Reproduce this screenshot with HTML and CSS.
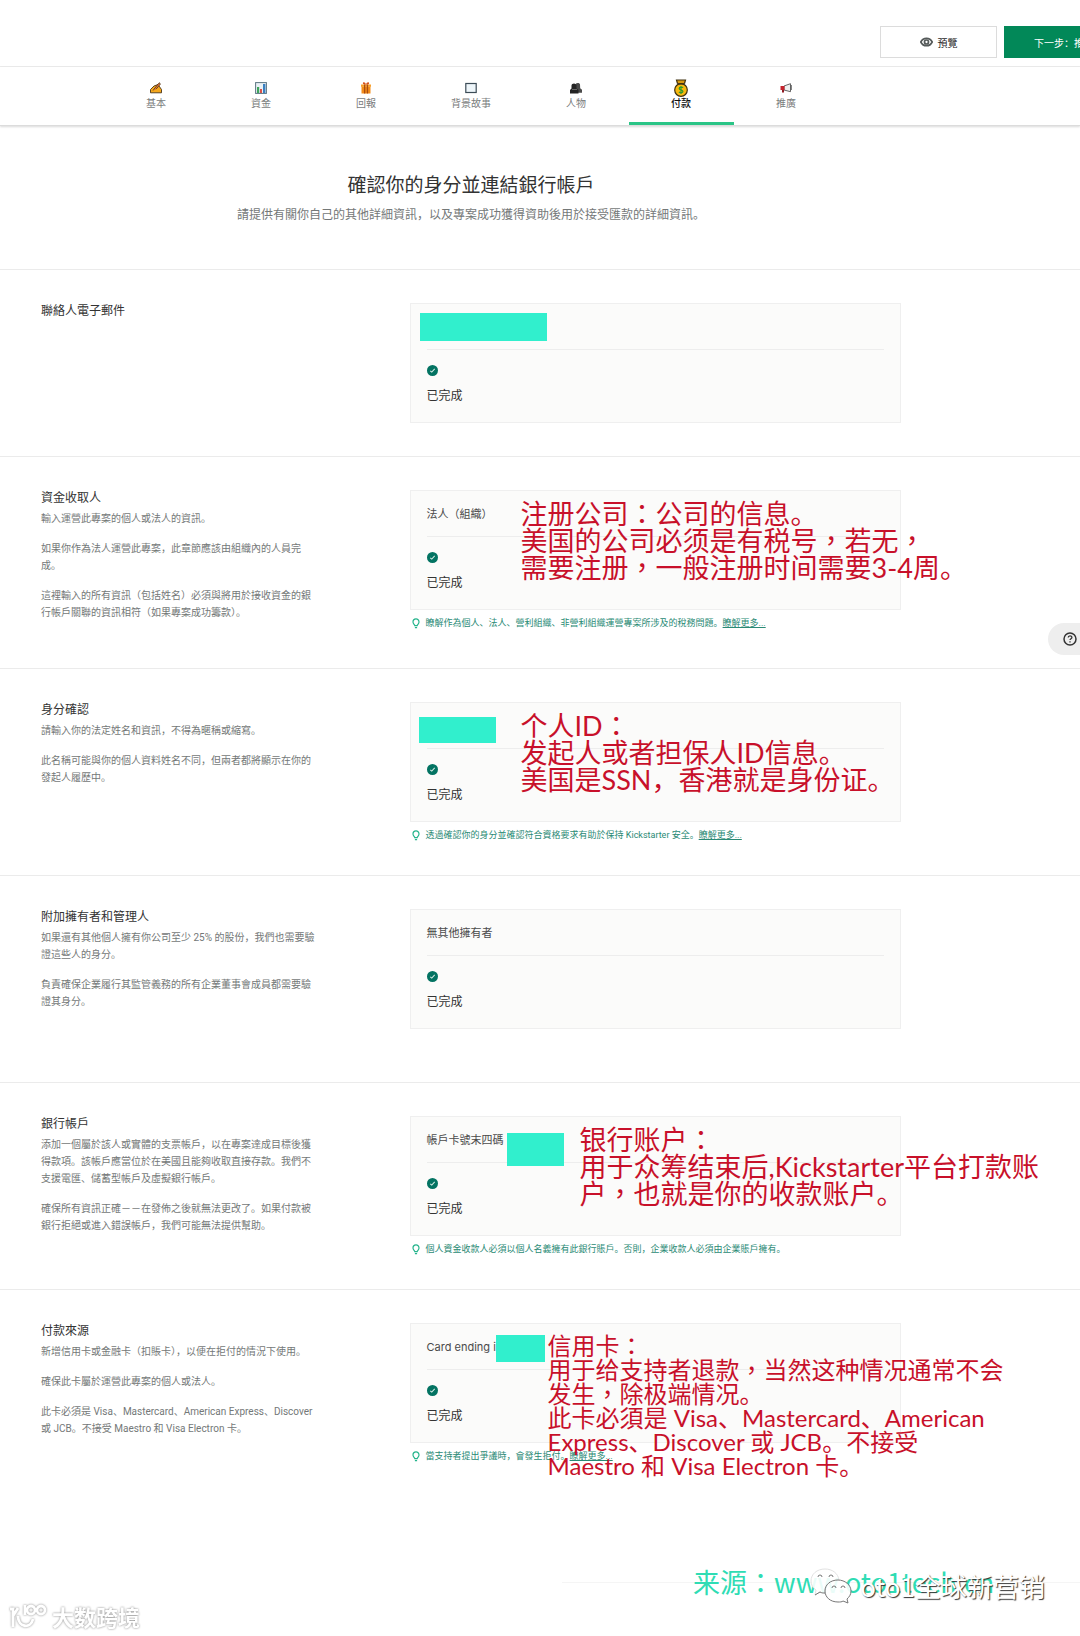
FILE: index.html
```html
<!DOCTYPE html>
<html lang="zh">
<head>
    <meta charset="utf-8">
    <meta name="viewport" content="width=device-width, initial-scale=1.0">
    <title>確認你的身分並連結銀行帳戶</title>
    <link rel="stylesheet" href="styles.css">
</head>
<body>
    <svg class="sprite" width="0" height="0" aria-hidden="true">
        <symbol id="check" viewBox="0 0 12 12">
            <circle cx="6" cy="6" r="6" fill="#037362"/>
            <path d="M3.6 6.3l1.6 1.5 3.2-3.5" fill="none" stroke="#d5ece6" stroke-width="1.1"/>
        </symbol>
        <symbol id="bulb" viewBox="0 0 8 11">
            <path d="M2.8 7.6C2.6 6.4 1 5.8 1 3.9a3 3 0 0 1 6 0c0 1.900-1.600 2.500-1.800 3.700zM2.900 9.600h2.200" fill="none" stroke="#25b48c" stroke-width="1.2"/>
        </symbol>
    </svg>

    <header class="topbar">
        <button class="btn" type="button">
            <svg width="13" height="10" viewBox="0 0 13 10"><path d="M.8 5C2 2.600 4 1.300 6.500 1.300S11 2.600 12.200 5C11 7.400 9 8.700 6.500 8.700S2 7.400.8 5z" fill="none" stroke="#555a5a" stroke-width="1.700"/><circle cx="6.500" cy="5" r="2" fill="none" stroke="#555a5a" stroke-width="1.700"/></svg>
            預覽
        </button>
        <button class="btn btn-primary" type="button">下一步：推廣</button>
    </header>

    <nav class="tabs">
        <div class="wrap tabs-list">
            <a class="tab" href="#">
                <svg width="12" height="12" viewBox="0 0 12 12"><path d="M.5 10.800V7.500L4 4l4-1.500 1 1.500 2.500 3.500v3.300z" fill="#f5a81c" stroke="#4a3417" stroke-width=".9"/><path d="M3 8.500l5.500-7 1-.8.8 1.500-4.300 5" fill="#e8743b" stroke="#4a3417" stroke-width=".8"/></svg>
                基本
            </a>
            <a class="tab" href="#">
                <svg width="12" height="12" viewBox="0 0 12 12"><rect x=".6" y=".6" width="10.800" height="10.800" fill="#e9f1f5" stroke="#5b7482"/><path d="M2 5h2.200v6H2z" fill="#3da45c"/><path d="M5 7h2v4H5z" fill="#d9534a"/><path d="M8 2h2.400v9H8z" fill="#3a7fc1"/></svg>
                資金
            </a>
            <a class="tab" href="#">
                <svg width="12" height="12" viewBox="0 0 12 12"><path d="M1.500 4.500h9v7h-9z" fill="#f28c1b"/><path d="M1 2.500h10v2.300H1z" fill="#f7a02c"/><path d="M4 2.500h1.300v9H4zM6.800 2.500h1.300v9H6.800z" fill="#a94c12"/><path d="M6 2.500C3 2.500 2.500 1.500 3 .7 4-.2 5.500.7 6 2.500 6.500.7 8-.2 9 .7c.5.8 0 1.800-3 1.800z" fill="#d5521a"/></svg>
                回報
            </a>
            <a class="tab" href="#">
                <svg width="12" height="12" viewBox="0 0 12 12"><rect x=".8" y="1.500" width="10.400" height="9" fill="#eef6fa" stroke="#3c4c57" stroke-width="1.200"/></svg>
                背景故事
            </a>
            <a class="tab" href="#">
                <svg width="12" height="12" viewBox="0 0 12 12"><path d="M6 1.500c1-1 3.500-.8 4 .8l.2 4 1.800 1.500v3H6z" fill="#4a4a4a"/><path d="M1.500 3.500C1.500.8 6.500.8 6.500 3.500v3L8.500 8v3.500H0V8l1.500-1.500z" fill="#242424"/><path d="M2 7.500h5" stroke="#777" stroke-width=".8"/></svg>
                人物
            </a>
            <a class="tab tab-active" href="#" aria-current="page">
                <svg width="16" height="18" viewBox="0 0 16 18"><path d="M4.500 4.500l-1-3.500h9l-1 3.500" fill="#d99a10" stroke="#3f3010" stroke-width="1.200"/><circle cx="8" cy="11" r="6.300" fill="#f7b90f" stroke="#3f3010" stroke-width="1.200"/><path d="M4.200 4.800h7.600" stroke="#3f3010" stroke-width="1.400"/><path d="M10 8.700C9.500 7.900 6.200 7.700 6.200 9.400s3.700 1.200 3.700 3c0 1.700-3.200 1.600-3.900.5M8 7v8" fill="none" stroke="#2f9c2c" stroke-width="1.200"/></svg>
                付款
            </a>
            <a class="tab" href="#">
                <svg width="12" height="12" viewBox="0 0 12 12"><path d="M4 4l6.500-2.300v8L4 8z" fill="#eef0f0" stroke="#555" stroke-width=".9"/><path d="M.5 4h4v4h-4z" fill="#c4222c"/><path d="M2 8h2v2.500H2z" fill="#8f1a22"/><path d="M11.300 3v5" stroke="#555" stroke-width=".9"/></svg>
                推廣
            </a>
        </div>
    </nav>

    <main>
        <div class="intro">
            <div class="wrap">
                <h1>確認你的身分並連結銀行帳戶</h1>
                <p>請提供有關你自己的其他詳細資訊，以及專案成功獲得資助後用於接受匯款的詳細資訊。</p>
            </div>
        </div>

        <section class="section section-short">
            <div class="wrap row">
                <div class="copy">
                    <h2>聯絡人電子郵件</h2>
                </div>
                <div class="detail">
                    <div class="card">
                        <div class="card-head"></div>
                        <svg class="check"><use href="#check"/></svg>
                        <p class="status">已完成</p>
                        <span class="mask mask-email"></span>
                    </div>
                </div>
            </div>
        </section>

        <section class="section">
            <div class="wrap row">
                <div class="copy">
                    <h2>資金收取人</h2>
                    <p>輸入運營此專案的個人或法人的資訊。</p>
                    <p>如果你作為法人運營此專案，此章節應該由組織內的人員完成。</p>
                    <p>這裡輸入的所有資訊（包括姓名）必須與將用於接收資金的銀行帳戶關聯的資訊相符（如果專案成功籌款）。</p>
                </div>
                <div class="detail">
                    <div class="card">
                        <div class="card-head">法人（組織）</div>
                        <svg class="check"><use href="#check"/></svg>
                        <p class="status">已完成</p>
                        <p class="note">注册公司<span class="mid" lang="zh-Hant">：</span>公司的信息。<br>美国的公司必须是有税号<span class="mid" lang="zh-Hant">，</span>若无<span class="mid" lang="zh-Hant">，</span><br>需要注册<span class="mid" lang="zh-Hant">，</span>一般注册时间需要3-4周。</p>
                    </div>
                    <p class="hint"><svg class="bulb"><use href="#bulb"/></svg><span>瞭解作為個人、法人、營利組織、非營利組織運營專案所涉及的稅務問題。<a href="#">瞭解更多...</a></span></p>
                </div>
            </div>
        </section>

        <section class="section">
            <div class="wrap row">
                <div class="copy">
                    <h2>身分確認</h2>
                    <p>請輸入你的法定姓名和資訊，不得為暱稱或縮寫。</p>
                    <p>此名稱可能與你的個人資料姓名不同，但兩者都將顯示在你的發起人履歷中。</p>
                </div>
                <div class="detail">
                    <div class="card">
                        <div class="card-head"></div>
                        <svg class="check"><use href="#check"/></svg>
                        <p class="status">已完成</p>
                        <span class="mask mask-name"></span>
                        <p class="note">个人ID<span class="mid" lang="zh-Hant">：</span><br>发起人或者担保人ID信息。<br>美国是SSN，香港就是身份证。</p>
                    </div>
                    <p class="hint"><svg class="bulb"><use href="#bulb"/></svg><span>透過確認你的身分並確認符合資格要求有助於保持 Kickstarter 安全。<a href="#">瞭解更多...</a></span></p>
                </div>
            </div>
        </section>

        <section class="section">
            <div class="wrap row">
                <div class="copy">
                    <h2>附加擁有者和管理人</h2>
                    <p>如果還有其他個人擁有你公司至少 25% 的股份，我們也需要驗證這些人的身分。</p>
                    <p>負責確保企業履行其監管義務的所有企業董事會成員都需要驗證其身分。</p>
                </div>
                <div class="detail">
                    <div class="card">
                        <div class="card-head">無其他擁有者</div>
                        <svg class="check"><use href="#check"/></svg>
                        <p class="status">已完成</p>
                    </div>
                </div>
            </div>
        </section>

        <section class="section">
            <div class="wrap row">
                <div class="copy">
                    <h2>銀行帳戶</h2>
                    <p>添加一個屬於該人或實體的支票帳戶，以在專案達成目標後獲得款項。該帳戶應當位於在美國且能夠收取直接存款。我們不支援電匯、儲蓄型帳戶及虛擬銀行帳戶。</p>
                    <p>確保所有資訊正確－－在發佈之後就無法更改了。如果付款被銀行拒絕或進入錯誤帳戶，我們可能無法提供幫助。</p>
                </div>
                <div class="detail">
                    <div class="card">
                        <div class="card-head">帳戶卡號末四碼</div>
                        <svg class="check"><use href="#check"/></svg>
                        <p class="status">已完成</p>
                        <span class="mask mask-account"></span>
                        <p class="note note-bank">银行账户<span class="mid" lang="zh-Hant">：</span><br>用于众筹结束后,Kickstarter平台打款账<br>户<span class="mid" lang="zh-Hant">，</span>也就是你的收款账户。</p>
                    </div>
                    <p class="hint"><svg class="bulb"><use href="#bulb"/></svg><span>個人資金收款人必須以個人名義擁有此銀行賬戶。否則，企業收款人必須由企業賬戶擁有。</span></p>
                </div>
            </div>
        </section>

        <section class="section">
            <div class="wrap row">
                <div class="copy">
                    <h2>付款來源</h2>
                    <p>新增信用卡或金融卡（扣賬卡），以便在拒付的情況下使用。</p>
                    <p>確保此卡屬於運營此專案的個人或法人。</p>
                    <p>此卡必須是 Visa、Mastercard、American Express、Discover 或 JCB。不接受 Maestro 和 Visa Electron 卡。</p>
                </div>
                <div class="detail">
                    <div class="card">
                        <div class="card-head">Card ending in</div>
                        <svg class="check"><use href="#check"/></svg>
                        <p class="status">已完成</p>
                        <span class="mask mask-card"></span>
                        <p class="note note-card">信用卡<span class="mid" lang="zh-Hant">：</span><br>用于给支持者退款<span class="mid" lang="zh-Hant">，</span>当然这种情况通常不会<br>发生<span class="mid" lang="zh-Hant">，</span>除极端情况。<br>此卡必須是 Visa、Mastercard、American<br>Express、Discover 或 JCB。不接受<br>Maestro 和 Visa Electron 卡。</p>
                    </div>
                    <p class="hint"><svg class="bulb"><use href="#bulb"/></svg><span>當支持者提出爭議時，會發生拒付。<a href="#">瞭解更多...</a></span></p>
                </div>
            </div>
        </section>
    </main>

    <footer class="footer">
        <p class="source">来源<span class="mid" lang="zh-Hant">：</span>www.oto1tech.cn</p>
        <div class="wechat">
            <svg width="42" height="36" viewBox="0 0 42 36">
                <path d="M15 1c7 0 13 4 14 11-8 0-14 5-14 11v2c-2 0-3 0-5-1l-5 3 1-5c-3-2-5-5-5-9C1 6 7 1 15 1z" fill="#fff" fill-opacity=".9" stroke="#e2e2e2"/>
                <path d="M5 27l5-3c2 1 3 1 5 1" fill="none" stroke="#777"/>
                <path d="M28 12c7 0 13 5 13 11 0 4-2 6-4 8l1 4-5-2c-1 1-3 1-5 1-8 0-13-5-13-11s5-11 13-11z" fill="#fff" fill-opacity=".9" stroke="#777"/>
                <path d="M8 9a2 2 0 0 1 4 0M19 9a2 2 0 0 1 4 0M22 20a2 2 0 0 1 4 0M31 20a2 2 0 0 1 4 0" fill="none" stroke="#777"/>
            </svg>
            <span>oto1全球新营销</span>
        </div>
        <div class="brand">
            <svg width="38" height="26" viewBox="0 0 38 26">
                <g fill="none" stroke="#fff" stroke-width="2.800">
                    <path d="M1 6h3v18M9 5L4 13M9 13c0 12 13 13 15 3"/>
                    <path d="M16 2v10"/>
                    <circle cx="22" cy="7" r="4"/>
                    <circle cx="32" cy="7" r="4"/>
                </g>
            </svg>
            <span>大数跨境</span>
        </div>
    </footer>

    <button class="help" type="button" aria-label="說明">
        <svg width="14" height="14" viewBox="0 0 14 14"><circle cx="7" cy="7" r="6" fill="none" stroke="#333" stroke-width="1.500"/><path d="M5.200 5.600c0-2.400 3.700-2.300 3.700-.2 0 1.300-1.900 1.300-1.900 2.700M7 9.300v1.200" fill="none" stroke="#333" stroke-width="1.300"/></svg>
    </button>
</body>
</html>
```

FILE: styles.css
```css
* {
    box-sizing: border-box;
}
body {
    margin: 0;
    position: relative;
    overflow-x: hidden;
    background-color: #fff;
    color: #333;
    font-family: Roboto, "Noto Sans CJK SC", sans-serif;
    font-size: 12px;
}
h1, h2, p {
    margin: 0;
    font-weight: 400;
}
.sprite {
    position: absolute;
}
.wrap {
    max-width: 860px;
    margin-left: 41px;
}

/* top bar */
.topbar {
    display: flex;
    justify-content: flex-end;
    gap: 7px;
    padding-top: 26px;
    height: 67px;
    overflow: hidden;
    border-bottom: 1px solid #ebebeb;
}
.btn {
    display: flex;
    align-items: center;
    justify-content: center;
    gap: 5px;
    flex: none;
    width: 117px;
    height: 32px;
    border: 1px solid #dcdcdc;
    background-color: #fff;
    color: #282828;
    font-family: inherit;
    font-size: 10px;
}
.btn-primary {
    width: 120px;
    margin-right: -44px;
    border-color: #028858;
    background-color: #028858;
    color: #fff;
}

/* step navigation */
.tabs {
    border-bottom: 1px solid #dcdcdc;
    box-shadow: 0 1px 2px rgba(0, 0, 0, 0.15);
}
.tabs-list {
    display: flex;
    justify-content: center;
}
.tab {
    display: flex;
    flex-direction: column;
    align-items: center;
    justify-content: center;
    gap: 3px;
    width: 105px;
    height: 58px;
    color: #7a7d7d;
    font-size: 10px;
    line-height: 14px;
    text-decoration: none;
}
.tab-active {
    gap: 0;
    border-bottom: 3px solid #2bc587;
    color: #111;
    font-weight: 500;
}

.intro {
    padding: 46px 0 44px;
    text-align: center;
}
.intro h1 {
    font-size: 19px;
    line-height: 28px;
}
.intro p {
    margin-top: 5px;
    color: #747878;
    line-height: 20px;
}

/* sections */
.section {
    min-height: 207px;
    padding: 33px 0;
    border-top: 1px solid #ebebeb;
}
.section-short {
    min-height: 0;
}
.row {
    display: grid;
    grid-template-columns: 3fr 4fr;
}
.copy {
    padding-bottom: 1px;
}
.copy h2 {
    margin-bottom: 4px;
    font-size: 12px;
    line-height: 16px;
}
.copy p {
    max-width: 279px;
    margin-bottom: 13px;
    color: #747878;
    font-size: 10px;
    line-height: 17px;
}
.card {
    position: relative;
    height: 120px;
    padding: 0 16px;
    border: 1px solid #efefef;
    background-color: #fbfbfa;
}
.card-head {
    height: 46px;
    border-bottom: 1px solid #ededed;
    color: #4a4a4a;
    font-family: Inter, "Noto Sans CJK SC", sans-serif;
    font-size: 11px;
    line-height: 47px;
}
.check {
    display: block;
    width: 11px;
    height: 11px;
    margin: 15px 0 10px;
}
.status {
    line-height: 20px;
}
.hint {
    display: flex;
    align-items: center;
    gap: 6px;
    margin-top: 6px;
    padding-left: 2px;
    color: #2a8a75;
    font-size: 9px;
    line-height: 14px;
}
.hint a {
    color: inherit;
}
.bulb {
    width: 8px;
    height: 11px;
}

/* covered values */
.mask {
    position: absolute;
    background-color: #31efcd;
}
.mask-email {
    left: 9px;
    top: 9px;
    width: 127px;
    height: 28px;
}
.mask-name {
    left: 8px;
    top: 14px;
    width: 77px;
    height: 26px;
}
.mask-account {
    left: 96px;
    top: 16px;
    width: 57px;
    height: 33px;
}
.mask-card {
    left: 85px;
    top: 11px;
    width: 49px;
    height: 27px;
}

/* red notes over the cards */
.note {
    position: absolute;
    left: 110px;
    top: 9px;
    z-index: 1;
    color: #c8102a;
    font-family: Lato, "Noto Sans CJK SC", sans-serif;
    font-size: 27px;
    line-height: 27px;
    white-space: nowrap;
}
.note-bank {
    left: 169px;
}
.note-card {
    left: 137px;
    top: 10px;
    font-size: 24px;
    line-height: 24px;
}
.mid {
    font-family: "Noto Sans CJK TC", sans-serif;
    line-height: 0;
}

.footer {
    position: relative;
    height: 140px;
    font-family: "Noto Sans CJK SC", sans-serif;
}
.footer::before {
    content: "";
    position: absolute;
    right: 0;
    bottom: 53px;
    width: 48%;
    border-top: 1px solid #f5f5f5;
}
.source {
    position: absolute;
    left: 693px;
    bottom: 38px;
    color: #2fdcb4;
    font-size: 27px;
    line-height: 32px;
}
.wechat {
    position: absolute;
    right: 35px;
    bottom: 32px;
    display: flex;
    align-items: center;
    gap: 8px;
    color: #fff;
    font-size: 26px;
    line-height: 36px;
    text-shadow: 1px 1px 1px #333;
}
.brand {
    position: absolute;
    left: 9px;
    bottom: 6px;
    display: flex;
    align-items: center;
    gap: 5px;
    color: #fff;
    font-size: 22px;
    font-weight: 700;
    line-height: 28px;
    filter: drop-shadow(0 0 1px #888);
}

.help {
    position: absolute;
    right: 0;
    top: 623px;
    display: flex;
    align-items: center;
    width: 32px;
    height: 32px;
    padding: 0 0 0 15px;
    border: 0;
    border-radius: 16px 0 0 16px;
    background-color: #eee;
}
```
